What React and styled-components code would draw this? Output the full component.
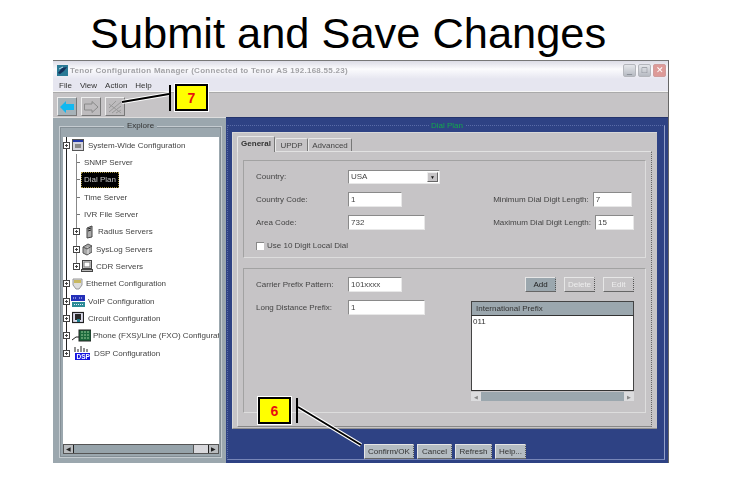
import styled, { createGlobalStyle } from 'styled-components'

const GlobalStyle = createGlobalStyle`
  html, body {
    margin: 0;
    background: #fff;
    font-family: "Liberation Sans", Arial, sans-serif;
  }
`

const Page = styled.div`
  position: relative;
  width: 730px;
  height: 480px;
  overflow: hidden;
  background: #fff;
`

const Heading = styled.h1`
  margin: 0;
  height: 60px;
  padding: 9px 0 0 90px;
  box-sizing: border-box;
  font-size: 43.4px;
  line-height: 48px;
  font-weight: normal;
  color: #000;
`

const Window = styled.div`
  display: flex;
  flex-direction: column;
  width: 616px;
  height: 403px;
  margin-left: 53px;
  border-top: 1px solid #777;
  border-right: 1px solid #666;
  box-sizing: border-box;
  background: #c6c4c6;
  font-size: 8px;
  color: #444;
  filter: blur(0.35px);
`

const TitleBar = styled.div`
  display: flex;
  align-items: center;
  height: 18px;
  padding: 0 2px 0 4px;
  flex: none;
  background: linear-gradient(#dcdce6, #fbfbfd 45%, #e6e6f0);
`

const AppIcon = styled.svg`
  width: 11px;
  height: 11px;
  flex: none;
`

const TitleText = styled.span`
  margin-left: 2px;
  font-weight: bold;
  font-size: 8px;
  letter-spacing: 0.27px;
  color: #a2a2a6;
  white-space: nowrap;
`

const WindowButtons = styled.div`
  display: flex;
  gap: 2px;
  margin-left: auto;
`

const WindowButton = styled.div`
  display: flex;
  align-items: center;
  justify-content: center;
  width: 13px;
  height: 13px;
  border: 1px solid ${p => (p.$close ? '#d09c9c' : '#b4b6bc')};
  border-radius: 2px;
  box-sizing: border-box;
  background: ${p => (p.$close ? '#dd9a98' : 'linear-gradient(#e4e6ea, #b6bac2)')};
  color: ${p => (p.$close ? '#fff' : '#70747c')};
  font-size: 9px;
  line-height: 1;
`

const MenuBar = styled.div`
  display: flex;
  align-items: center;
  gap: 8px;
  height: 13px;
  padding-left: 6px;
  flex: none;
  background: #e6e6f0;
  border-bottom: 1px solid #f6f6f6;
  box-sizing: border-box;
  color: #333;
`

const Toolbar = styled.div`
  display: flex;
  align-items: center;
  gap: 4px;
  height: 25px;
  padding: 3px 0 0 4px;
  flex: none;
  box-sizing: border-box;
  border-top: 1px solid #aaa;
  background: #c6c4c6;
`

const ToolButton = styled.div`
  display: flex;
  align-items: center;
  justify-content: center;
  width: 20px;
  height: 19px;
  box-sizing: border-box;
  background: ${p => (p.$active ? '#a6b2b8' : '#bdbbbd')};
  border: 1px solid #eee;
  border-right-color: #777;
  border-bottom-color: #777;
`

const Body = styled.div`
  display: flex;
  flex: 1;
  min-height: 0;
`

const Explorer = styled.div`
  position: relative;
  display: flex;
  flex-direction: column;
  width: 173px;
  flex: none;
  box-sizing: border-box;
  padding: 18.5px 7px 9px 10px;
  background: #9ba7ae;
  border-top: 1px solid #ddd;
`

const ExplorerFrame = styled.div`
  position: absolute;
  inset: 8px 4px 5px 6px;
  border: 1px solid #c4cbd0;
  outline: 1px solid #848f96;
  outline-offset: -2px;
`

const ExplorerLegend = styled.span`
  position: absolute;
  top: -6px;
  left: 64px;
  padding: 0 3px;
  background: #9ba7ae;
  color: #333;
`

const TreeBox = styled.div`
  position: relative;
  flex: 1;
  min-height: 0;
  overflow: hidden;
  background: #fff;
`

const TreeRow = styled.div`
  display: flex;
  align-items: center;
  height: 17.33px;
  padding-left: ${p => p.$indent || 0}px;
  white-space: nowrap;
`

const VerticalLine = styled.div`
  position: absolute;
  left: ${p => p.$left}px;
  top: ${p => p.$top}px;
  height: ${p => p.$height}px;
  width: 1px;
  background: ${p => p.$color};
`

const Expander = styled.span`
  position: relative;
  z-index: 1;
  width: 7px;
  height: 7px;
  flex: none;
  box-sizing: border-box;
  border: 1px solid #444;
  background: linear-gradient(#444, #444) center / 3px 1px no-repeat, linear-gradient(#444, #444) center / 1px 3px no-repeat, #fff;
`

const Tick = styled.span`
  width: 4px;
  height: 1px;
  flex: none;
  background: #777;
`

const IconSlot = styled.svg`
  position: relative;
  z-index: 1;
  flex: none;
  height: 14px;
  width: ${p => p.$w}px;
  margin-left: ${p => p.$ml}px;
`

const TreeLabel = styled.span`
  margin-left: ${p => p.$ml}px;
  ${p => p.$selected && `
    position: relative;
    z-index: 1;
    margin-left: 1px;
    padding: 3.5px 3px;
    background: #000;
    color: #c8c8c8;
    outline: 1px dotted #a8943c;
    outline-offset: -1px;
  `}
`

const HScroll = styled.div`
  display: flex;
  height: 10px;
  flex: none;
  border: 1px solid #555;
  box-sizing: border-box;
  background: #96a3aa;
`

const ScrollArrow = styled.div`
  display: flex;
  align-items: center;
  justify-content: center;
  width: ${p => p.$w}px;
  flex: none;
  background: #b9bcbf;
  border-right: ${p => (p.$left ? '1px solid #222' : 'none')};
  border-left: ${p => (p.$left ? 'none' : '1px solid #222')};
  color: #222;
  font-size: 6px;
  line-height: 1;
`

const ScrollTrack = styled.div`
  flex: 1;
`

const ScrollThumb = styled.div`
  width: 14px;
  flex: none;
  background: #d8d8dc;
  border-left: 1px solid #555;
`

const DialPlan = styled.div`
  position: relative;
  display: flex;
  flex-direction: column;
  flex: 1;
  min-width: 0;
  padding: 14px 11px 4px 6px;
  box-sizing: border-box;
  background: #2e4284;
  border-top: 1px solid #24346c;
`

const DialFrame = styled.div`
  position: absolute;
  inset: 7px 3px 3px 1px;
  border: 1px dotted #5a6ca8;
  border-bottom: 1px solid #7786b8;
  border-right: 1px solid #93a0c8;
`

const DialLegend = styled.span`
  position: absolute;
  top: -5px;
  left: 201px;
  padding: 0 2px;
  background: #2e4284;
  color: #12a84c;
`

const TabPanel = styled.div`
  display: flex;
  flex-direction: column;
  height: 297px;
  flex: none;
  padding: 3px 5px 1px 4px;
  box-sizing: border-box;
  background: #c6c4c6;
  border-top: 1px solid #d8d8d8;
  border-left: 1px solid #d8d8d8;
  border-bottom: 1px solid #909090;
`

const TabRow = styled.div`
  display: flex;
  align-items: flex-end;
  height: 15px;
  flex: none;
`

const Tab = styled.div`
  display: flex;
  align-items: center;
  justify-content: center;
  width: ${p => p.$w}px;
  height: ${p => (p.$active ? 16 : 13)}px;
  margin-bottom: ${p => (p.$active ? -1 : 0)}px;
  padding-bottom: ${p => (p.$active ? 2 : 0)}px;
  box-sizing: border-box;
  position: relative;
  z-index: 1;
  background: #c6c4c6;
  border: 1px solid #e8e8e8;
  border-right-color: #777;
  border-bottom: none;
  border-radius: 2px 2px 0 0;
  font-weight: ${p => (p.$active ? 'bold' : 'normal')};
  color: ${p => (p.$active ? '#333' : '#444')};
`

const TabBody = styled.div`
  display: flex;
  flex-direction: column;
  gap: 10px;
  flex: 1;
  padding: 8px 5px 13px 5px;
  box-sizing: border-box;
  border: 1px solid #e2e2e2;
  border-right: 1px dotted #666;
  border-bottom: 1px solid #888;
`

const GroupBox = styled.div`
  display: flex;
  justify-content: space-between;
  height: ${p => p.$height}px;
  flex: ${p => (p.$grow ? 1 : 'none')};
  padding: 4px 11px 0 12px;
  box-sizing: border-box;
  border: 1px solid #a2a2a2;
  border-right-color: #ddd;
  border-bottom-color: #ddd;
`

const FormColumn = styled.div`
  display: flex;
  flex-direction: column;
`

const FormRow = styled.div`
  display: flex;
  align-items: center;
  height: 23.2px;
`

const FieldLabel = styled.span`
  width: ${p => p.$w || 92}px;
  flex: none;
`

const RightLabel = styled.span`
  margin-right: 4px;
  white-space: nowrap;
`

const TextField = styled.div`
  display: flex;
  align-items: center;
  width: ${p => p.$w}px;
  height: 15px;
  padding-left: 2px;
  box-sizing: border-box;
  background: #fff;
  border-top: 1px solid #8a8a8a;
  border-left: 1px solid #8a8a8a;
  border-right: 1px solid #e8e8e8;
  border-bottom: 1px solid #e8e8e8;
`

const SelectField = styled(TextField)`
  justify-content: space-between;
  padding-right: 1px;
  height: 14px;
`

const SelectArrow = styled.span`
  display: flex;
  align-items: center;
  justify-content: center;
  width: 11px;
  height: 10px;
  background: #c6c4c6;
  border: 1px solid #eee;
  border-right-color: #666;
  border-bottom-color: #666;
  box-sizing: border-box;
  color: #111;
  font-size: 5px;
`

const CheckBox = styled.span`
  width: 7px;
  height: 7px;
  margin-right: 3px;
  flex: none;
  background: #fff;
  border-top: 1px solid #888;
  border-left: 1px solid #888;
`

const ButtonRow = styled.div`
  display: flex;
  justify-content: flex-end;
  gap: 8px;
  height: 15px;
  margin-top: 4px;
`

const ActionButton = styled.div`
  display: flex;
  align-items: center;
  justify-content: center;
  width: ${p => p.$w}px;
  height: ${p => p.$h || 15}px;
  flex: none;
  box-sizing: border-box;
  background: ${p => p.$bg};
  border: 1px solid #e6e6e6;
  border-right: 1px dotted #555;
  border-bottom: 1px solid #666;
  color: ${p => p.$color};
`

const PrefixTable = styled.div`
  display: flex;
  flex-direction: column;
  width: 163px;
  height: 100px;
  margin-top: 9px;
`

const TableHead = styled.div`
  display: flex;
  align-items: center;
  height: 15px;
  padding-left: 4px;
  flex: none;
  box-sizing: border-box;
  background: #9ba7ae;
  border: 1px solid #444;
  border-bottom-color: #333;
  color: #333;
`

const TableBody = styled.div`
  flex: 1;
  padding: 1px 1px;
  background: #fff;
  border-left: 1px solid #444;
  border-right: 1px solid #444;
  border-bottom: 1px solid #333;
  color: #333;
`

const TableScroll = styled.div`
  display: flex;
  justify-content: space-between;
  height: 9px;
  flex: none;
  margin-top: 1px;
  background: #9ba7ae;
`

const TableArrow = styled.span`
  display: flex;
  align-items: center;
  justify-content: center;
  width: 10px;
  background: #dcdcde;
  color: #888;
  font-size: 5px;
`

const FooterButtons = styled.div`
  position: relative;
  z-index: 1;
  display: flex;
  gap: 3px;
  margin: auto 0 0 132px;
`

const CalloutBox = styled.div`
  position: absolute;
  left: ${p => p.$x}px;
  top: ${p => p.$y}px;
  display: flex;
  align-items: center;
  justify-content: center;
  width: 33px;
  height: 27px;
  box-sizing: border-box;
  background: #ffff00;
  border: 2px solid #000;
  outline: 1px solid #fff;
  color: #e81010;
  font-weight: bold;
  font-size: 14px;
`

const CalloutLines = styled.svg`
  position: absolute;
  left: 0;
  top: 0;
  width: 730px;
  height: 480px;
  pointer-events: none;
`

const TitleLogo = () => (
  <AppIcon viewBox="0 0 11 11">
    <rect width="11" height="11" fill="#2a7a96" />
    <path d="M1 8 L5 3 L10 2 L7 6 L3 9 Z" fill="#14305a" />
    <path d="M2 4 L6 2" stroke="#bde" strokeWidth="1" />
  </AppIcon>
)

const treeIcons = {
  system: (
    <>
      <rect x="0.5" y="1.5" width="11" height="11" fill="#d4d4dc" stroke="#555" />
      <rect x="1" y="2" width="10" height="2" fill="#2338a8" />
      <rect x="3" y="6" width="6" height="4" fill="#888" />
    </>
  ),
  radius: (
    <>
      <path d="M2 3 L7 1 V12 L2 13 Z" fill="#aaa" stroke="#444" />
      <path d="M3 4 L6 3 M3 6 L6 5" stroke="#222" />
    </>
  ),
  syslog: (
    <>
      <path d="M1 5 L6 2 L10 4 V10 L5 13 L1 11 Z" fill="#a8a8a8" stroke="#555" />
      <path d="M6 5 V12" stroke="#eee" />
      <path d="M1 5 L5 7 L10 4" stroke="#555" fill="none" />
    </>
  ),
  cdr: (
    <>
      <rect x="1.5" y="1.5" width="9" height="8" fill="#e4e4e4" stroke="#444" />
      <rect x="3" y="3" width="6" height="5" fill="#fff" stroke="#777" />
      <rect x="0.5" y="10.5" width="11" height="2" fill="#bbb" stroke="#444" />
    </>
  ),
  ethernet: (
    <>
      <path d="M1 2 H10 V8 L7 12 H4 L1 8 Z" fill="#ddd" stroke="#999" />
      <rect x="2" y="3" width="7" height="3" fill="#c8b860" />
    </>
  ),
  voip: (
    <>
      <rect x="0" y="1" width="14" height="6" fill="#2430b8" />
      <rect x="1" y="8" width="13" height="5" fill="#2c8c96" />
      <path d="M2 4 H6 M8 4 H12 M3 10.5 H12" stroke="#e6e6ff" strokeDasharray="1 1" />
    </>
  ),
  circuit: (
    <>
      <rect x="0.5" y="1.5" width="11" height="10" fill="#dde" stroke="#222" strokeWidth="1.2" />
      <rect x="3" y="3" width="6" height="6" fill="#2a2a2a" />
      <rect x="5" y="8" width="3" height="3" fill="#1c7a8a" />
    </>
  ),
  phone: (
    <>
      <rect x="7" y="1" width="12" height="11" fill="#1c6a3c" stroke="#222" />
      <path d="M9 3 H17 M9 6 H17 M9 9 H17" stroke="#9c9" strokeDasharray="2 1" />
      <path d="M0 11 L4 8 L7 8" stroke="#222" fill="none" />
    </>
  ),
  dsp: (
    <>
      <path d="M2 6 V1 M5 6 V3 M8 6 V0 M11 6 V2 M14 6 V3" stroke="#222" />
      <rect x="2" y="7" width="15" height="7" fill="#1414e0" />
      <text x="3.5" y="13" fontSize="6.5" fontWeight="bold" fill="#fff">DSP</text>
    </>
  ),
}

const treeRows = [
  { label: 'System-Wide Configuration', icon: 'system', w: 12, iconMl: 2, labelMl: 4, expand: true },
  { label: 'SNMP Server', indent: 13, labelMl: 4 },
  { label: 'Dial Plan', indent: 13, labelMl: 0, selected: true },
  { label: 'Time Server', indent: 13, labelMl: 4 },
  { label: 'IVR File Server', indent: 13, labelMl: 4 },
  { label: 'Radius Servers', icon: 'radius', w: 8, iconMl: 5, labelMl: 5, expand: true, indent: 10 },
  { label: 'SysLog Servers', icon: 'syslog', w: 10, iconMl: 2, labelMl: 4, expand: true, indent: 10 },
  { label: 'CDR Servers', icon: 'cdr', w: 12, iconMl: 1, labelMl: 3, expand: true, indent: 10 },
  { label: 'Ethernet Configuration', icon: 'ethernet', w: 11, iconMl: 2, labelMl: 3, expand: true },
  { label: 'VoIP Configuration', icon: 'voip', w: 14, iconMl: 1, labelMl: 3, expand: true },
  { label: 'Circuit Configuration', icon: 'circuit', w: 12, iconMl: 2, labelMl: 4, expand: true },
  { label: 'Phone (FXS)/Line (FXO) Configuration', icon: 'phone', w: 19, iconMl: 2, labelMl: 2, expand: true },
  { label: 'DSP Configuration', icon: 'dsp', w: 17, iconMl: 3, labelMl: 4, expand: true },
]

function TreeItem({ item }) {
  return (
    <TreeRow $indent={item.indent}>
      {item.expand ? <Expander /> : <Tick />}
      {item.icon && (
        <IconSlot $w={item.w} $ml={item.iconMl} viewBox={`0 0 ${item.w} 14`}>
          {treeIcons[item.icon]}
        </IconSlot>
      )}
      <TreeLabel $ml={item.labelMl} $selected={item.selected}>{item.label}</TreeLabel>
    </TreeRow>
  )
}

export default function App() {
  return (
    <Page>
      <GlobalStyle />
      <Heading>Submit and Save Changes</Heading>
      <Window>
        <TitleBar>
          <TitleLogo />
          <TitleText>Tenor Configuration Manager (Connected to Tenor AS 192.168.55.23)</TitleText>
          <WindowButtons>
            <WindowButton>_</WindowButton>
            <WindowButton>□</WindowButton>
            <WindowButton $close>✕</WindowButton>
          </WindowButtons>
        </TitleBar>
        <MenuBar>
          <span>File</span>
          <span>View</span>
          <span>Action</span>
          <span>Help</span>
        </MenuBar>
        <Toolbar>
          <ToolButton $active>
            <svg width="14" height="12" viewBox="0 0 14 12">
              <path d="M0 6 L6 0 V3 H14 V9 H6 V12 Z" fill="#12b8f0" />
            </svg>
          </ToolButton>
          <ToolButton>
            <svg width="14" height="12" viewBox="0 0 14 12">
              <path d="M14 6 L8 0.5 V3 H0.5 V9 H8 V11.5 Z" fill="none" stroke="#8a8a8a" />
            </svg>
          </ToolButton>
          <ToolButton>
            <svg width="14" height="14" viewBox="0 0 14 14">
              <path d="M1 8 L8 1 M1 12 L13 2 M4 13 L13 6 M8 13 L13 10 M1 4 L13 13" stroke="#999" strokeWidth="1" />
            </svg>
          </ToolButton>
        </Toolbar>
        <Body>
          <Explorer>
            <ExplorerFrame>
              <ExplorerLegend>Explore</ExplorerLegend>
            </ExplorerFrame>
            <TreeBox>
              <VerticalLine $left={3} $top={0} $height={217} $color="#222" />
              <VerticalLine $left={13} $top={17} $height={113} $color="#888" />
              {treeRows.map(item => (
                <TreeItem key={item.label} item={item} />
              ))}
            </TreeBox>
            <HScroll>
              <ScrollArrow $w={9} $left>◀</ScrollArrow>
              <ScrollTrack />
              <ScrollThumb />
              <ScrollArrow $w={9}>▶</ScrollArrow>
            </HScroll>
          </Explorer>
          <DialPlan>
            <DialFrame>
              <DialLegend>Dial Plan</DialLegend>
            </DialFrame>
            <TabPanel>
              <TabRow>
                <Tab $w={38} $active>General</Tab>
                <Tab $w={33}>UPDP</Tab>
                <Tab $w={44}>Advanced</Tab>
              </TabRow>
              <TabBody>
                <GroupBox $height={98}>
                  <FormColumn>
                    <FormRow>
                      <FieldLabel>Country:</FieldLabel>
                      <SelectField $w={92}>
                        USA
                        <SelectArrow>▼</SelectArrow>
                      </SelectField>
                    </FormRow>
                    <FormRow>
                      <FieldLabel>Country Code:</FieldLabel>
                      <TextField $w={54}>1</TextField>
                    </FormRow>
                    <FormRow>
                      <FieldLabel>Area Code:</FieldLabel>
                      <TextField $w={77}>732</TextField>
                    </FormRow>
                    <FormRow>
                      <CheckBox />
                      Use 10 Digit Local Dial
                    </FormRow>
                  </FormColumn>
                  <FormColumn>
                    <FormRow />
                    <FormRow>
                      <RightLabel>Minimum Dial Digit Length:</RightLabel>
                      <TextField $w={39}>7</TextField>
                    </FormRow>
                    <FormRow>
                      <RightLabel>Maximum Dial Digit Length:</RightLabel>
                      <TextField $w={39}>15</TextField>
                    </FormRow>
                  </FormColumn>
                </GroupBox>
                <GroupBox $grow>
                  <FormColumn>
                    <FormRow>
                      <FieldLabel>Carrier Prefix Pattern:</FieldLabel>
                      <TextField $w={54}>101xxxx</TextField>
                    </FormRow>
                    <FormRow>
                      <FieldLabel>Long Distance Prefix:</FieldLabel>
                      <TextField $w={77}>1</TextField>
                    </FormRow>
                  </FormColumn>
                  <FormColumn>
                    <ButtonRow>
                      <ActionButton $w={31} $bg="#9ba7ae" $color="#222">Add</ActionButton>
                      <ActionButton $w={31} $bg="#c6c4c6" $color="#eee">Delete</ActionButton>
                      <ActionButton $w={31} $bg="#c6c4c6" $color="#eee">Edit</ActionButton>
                    </ButtonRow>
                    <PrefixTable>
                      <TableHead>International Prefix</TableHead>
                      <TableBody>011</TableBody>
                      <TableScroll>
                        <TableArrow>◀</TableArrow>
                        <TableArrow>▶</TableArrow>
                      </TableScroll>
                    </PrefixTable>
                  </FormColumn>
                </GroupBox>
              </TabBody>
            </TabPanel>
            <FooterButtons>
              <ActionButton $w={50} $h={15} $bg="#b4bcc2" $color="#333">Confirm/OK</ActionButton>
              <ActionButton $w={35} $h={15} $bg="#b4bcc2" $color="#333">Cancel</ActionButton>
              <ActionButton $w={37} $h={15} $bg="#b4bcc2" $color="#333">Refresh</ActionButton>
              <ActionButton $w={31} $h={15} $bg="#b4bcc2" $color="#333">Help...</ActionButton>
            </FooterButtons>
          </DialPlan>
        </Body>
      </Window>
      <CalloutLines viewBox="0 0 730 480">
        <path d="M169 94 L122 102" stroke="#fff" strokeWidth="4" />
        <path d="M169 94 L122 102" stroke="#000" strokeWidth="2" />
        <path d="M170 85 V111" stroke="#000" strokeWidth="2" />
        <path d="M298 407 L361 445" stroke="#fff" strokeWidth="4" />
        <path d="M298 407 L361 445" stroke="#000" strokeWidth="2" />
        <path d="M297 398 V423" stroke="#000" strokeWidth="2" />
      </CalloutLines>
      <CalloutBox $x={175} $y={84}>7</CalloutBox>
      <CalloutBox $x={258} $y={397}>6</CalloutBox>
    </Page>
  )
}
